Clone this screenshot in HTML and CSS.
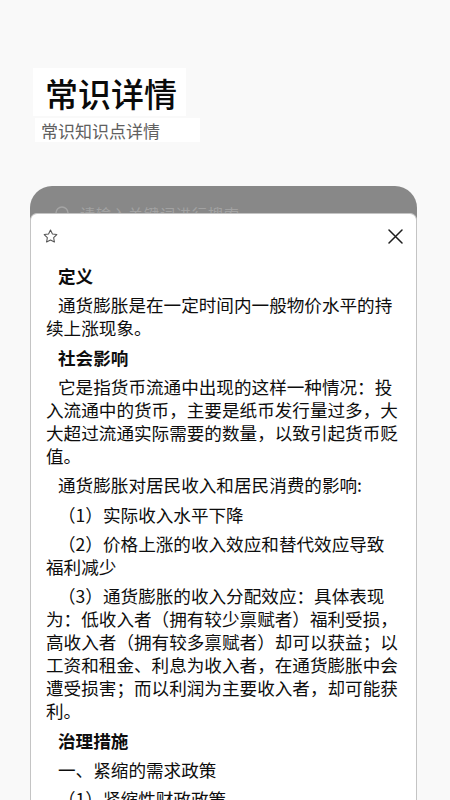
FILE: index.html
```html
<!DOCTYPE html>
<html lang="zh-CN">
<head>
<meta charset="utf-8">
<title>常识详情</title>
<link rel="stylesheet" href="styles.css">
</head>
<body>
<div class="page">
  <header class="header">
    <div class="title-box"><h1 class="title">常识详情</h1></div>
    <div class="sub-box"><p class="subtitle">常识知识点详情</p></div>
  </header>

  <section class="search-card">
    <div class="search-row">
      <svg class="search-icon" width="18" height="18" viewBox="0 0 18 18"><circle cx="8" cy="8" r="6" fill="none" stroke="#a4a4a4" stroke-width="1.5"/><line x1="12.5" y1="12.5" x2="16" y2="16" stroke="#a4a4a4" stroke-width="1.5"/></svg>
      <span class="search-text">请输入关键词进行搜索</span>
    </div>
  </section>

  <div class="sheet">
    <div class="sheet-head">
      <svg class="star" width="17" height="17" viewBox="0 0 24 24"><path d="M12 2.8l2.75 5.6 6.15.9-4.45 4.330 1.05 6.12L12 16.86l-5.5 2.89 1.05-6.12L3.1 9.3l6.15-.9z" fill="none" stroke="#555" stroke-width="1.5" stroke-linejoin="round"/></svg>
      <svg class="close" width="15" height="15" viewBox="0 0 15 15"><path d="M1 1L14 14M14 1L1 14" stroke="#1e1e1e" stroke-width="1.5" stroke-linecap="round"/></svg>
    </div>
    <div class="sheet-body">
      <p class="h">定义</p>
      <p class="t">通货膨胀是在一定时间内一般物价水平的持续上涨现象。</p>
      <p class="h">社会影响</p>
      <p class="t">它是指货币流通中出现的这样一种情况：投入流通中的货币，主要是纸币发行量过多，大大超过流通实际需要的数量，以致引起货币贬值。</p>
      <p class="t">通货膨胀对居民收入和居民消费的影响:</p>
      <p class="t">（1）实际收入水平下降</p>
      <p class="t">（2）价格上涨的收入效应和替代效应导致福利减少</p>
      <p class="t">（3）通货膨胀的收入分配效应：具体表现为：低收入者（拥有较少禀赋者）福利受损，高收入者（拥有较多禀赋者）却可以获益；以工资和租金、利息为收入者，在通货膨胀中会遭受损害；而以利润为主要收入者，却可能获利。</p>
      <p class="h">治理措施</p>
      <p class="t">一、紧缩的需求政策</p>
      <p class="t">（1）紧缩性财政政策</p>
    </div>
  </div>
</div>
</body>
</html>
```

FILE: styles.css
```css
* { box-sizing: border-box; }
html, body { margin: 0; padding: 0; }
body {
  background: #f9f9f9;
  font-family: "Noto Sans CJK SC", "Noto Sans", sans-serif;
  color: #111;
}
.page {
  position: relative;
  width: 450px;
  height: 800px;
  overflow: hidden;
}
.header {
  padding-top: 68px;
  padding-left: 33px;
  display: flex;
  flex-direction: column;
  align-items: flex-start;
}
.title-box {
  background: #ffffff;
  height: 48px;
  padding: 0 9px 0 12px;
}
.title {
  margin: 0;
  font-size: 33px;
  line-height: 50px;
  font-weight: 500;
  color: #0a0a0a;
}
.sub-box {
  background: #ffffff;
  margin-top: 2px;
  margin-left: 2px;
  height: 24px;
  padding: 0 40px 0 6px;
}
.subtitle {
  margin: 0;
  font-size: 17px;
  line-height: 26px;
  color: #606060;
}
.search-card {
  margin: 44px 0 0 30px;
  width: 387px;
  height: 80px;
  background: #888888;
  border-radius: 22px 22px 0 0;
  padding: 17px 0 0 24px;
}
.search-row {
  display: flex;
  align-items: center;
  gap: 8px;
}
.search-text {
  font-size: 15px;
  color: #a2a2a2;
  letter-spacing: 1px;
}
.sheet {
  position: absolute;
  top: 213px;
  left: 30px;
  width: 387px;
  bottom: 0;
  background: #ffffff;
  border: 1px solid #c4c4c4;
  border-bottom: none;
  border-radius: 7px 7px 0 0;
}
.sheet-head {
  height: 45px;
  display: flex;
  align-items: center;
  justify-content: space-between;
  padding: 0 13px 0 11px;
}
.sheet-body {
  padding: 5px 17px 0 15px;
  font-size: 17.6px;
  line-height: 23px;
  text-spacing-trim: space-all;
  color: #0d0d0d;
}
.sheet-body p {
  margin: 0 0 6.35px 0;
  text-indent: 12px;
}
.sheet-body .h {
  font-weight: 700;
}
```
